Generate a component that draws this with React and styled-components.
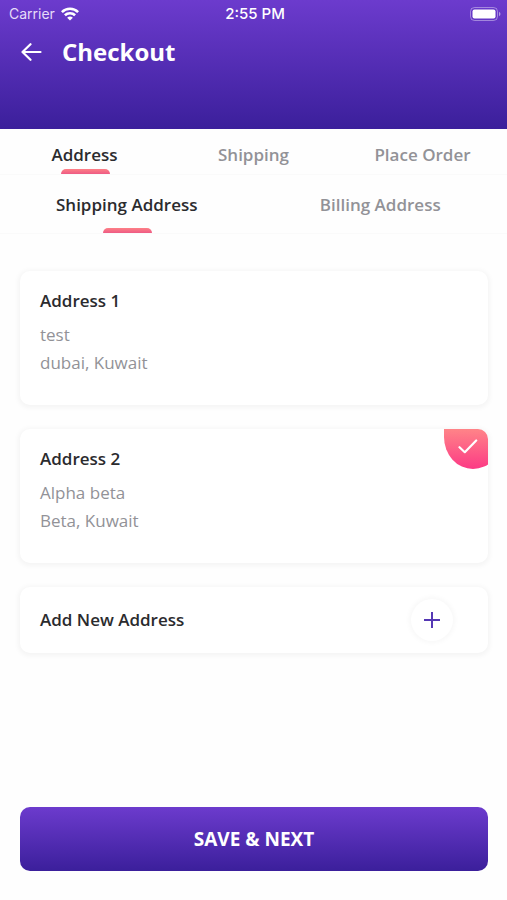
import React, { useState } from 'react'
import styled, { createGlobalStyle } from 'styled-components'

const addresses = [
    { id: 1, title: 'Address 1', name: 'test', place: 'dubai, Kuwait' },
    { id: 2, title: 'Address 2', name: 'Alpha beta', place: 'Beta, Kuwait' },
]

const steps = ['Address', 'Shipping', 'Place Order']
const kinds = ['Shipping Address', 'Billing Address']

function App() {
    const [step, setStep] = useState('Address')
    const [kind, setKind] = useState('Shipping Address')
    const [selected, setSelected] = useState(2)

    return (
        <Page>
            <GlobalStyle />
            <Header>
                <StatusBar>
                    <Carrier>
                        Carrier
                        <svg width="18" height="14" viewBox="0 0 18 14" fill="none" stroke="#fff" strokeWidth="2.6">
                            <path d="M0.9 5.1a11.6 11.6 0 0 1 16.2 0" />
                            <path d="M3.9 8.3a7.3 7.3 0 0 1 10.2 0" />
                            <path d="M9 13.6 6.1 10.8a4.2 4.2 0 0 1 5.8 0z" fill="#fff" stroke="none" />
                        </svg>
                    </Carrier>
                    <Time>2:55 PM</Time>
                    <Battery>
                        <svg width="31" height="14" viewBox="0 0 31 14">
                            <rect x="0.5" y="0.5" width="27" height="13" rx="4" fill="none" stroke="#fff" strokeOpacity="0.4" />
                            <rect x="2.5" y="2.5" width="23" height="9" rx="2" fill="#fff" />
                            <path d="M29 4.8v4.4c2-.8 2-3.6 0-4.4z" fill="#fff" fillOpacity="0.5" />
                        </svg>
                    </Battery>
                </StatusBar>
                <TitleBar>
                    <BackButton aria-label="Back">
                        <svg width="21" height="18" viewBox="0 0 21 18" fill="none" stroke="#fff" strokeWidth="2.2" strokeLinecap="round" strokeLinejoin="round">
                            <path d="M19.500 9H1.500M9.500 1.200 1.500 9l8 7.800" />
                        </svg>
                    </BackButton>
                    <Title>Checkout</Title>
                </TitleBar>
            </Header>

            <Tabs $height={46} $top={6}>
                {steps.map((item) => (
                    <Tab key={item} $active={item === step} onClick={() => setStep(item)}>
                        {item}
                    </Tab>
                ))}
            </Tabs>
            <Tabs $height={59} $top={2}>
                {kinds.map((item) => (
                    <Tab key={item} $active={item === kind} onClick={() => setKind(item)}>
                        {item}
                    </Tab>
                ))}
            </Tabs>

            <List>
                {addresses.map((item) => (
                    <AddressCard key={item.id}>
                        <Radio
                            name="address"
                            checked={selected === item.id}
                            onChange={() => setSelected(item.id)}
                        />
                        <CardTitle>{item.title}</CardTitle>
                        <CardLine>{item.name}</CardLine>
                        <CardLine>{item.place}</CardLine>
                        {selected === item.id && (
                            <Badge>
                                <svg width="20" height="15" viewBox="0 0 20 15" fill="none" stroke="#fff" strokeWidth="2.2" strokeLinecap="round" strokeLinejoin="round">
                                    <path d="M1.500 8.200 6.800 13.200 18.200 1.500" />
                                </svg>
                            </Badge>
                        )}
                    </AddressCard>
                ))}
                <AddCard>
                    <CardTitle>Add New Address</CardTitle>
                    <AddButton aria-label="Add New Address">
                        <svg width="16" height="16" viewBox="0 0 16 16" stroke="#5538b4" strokeWidth="2">
                            <path d="M8 0v16M0 8h16" />
                        </svg>
                    </AddButton>
                </AddCard>
            </List>

            <Footer>
                <SaveButton>SAVE &amp; NEXT</SaveButton>
            </Footer>
        </Page>
    )
}

export default App

const GlobalStyle = createGlobalStyle`
    * {
        box-sizing: border-box;
    }
    body {
        margin: 0;
        background: #fefefe;
        font-family: "Open Sans", "Noto Sans", sans-serif;
    }
    button {
        font-family: inherit;
        border: none;
        padding: 0;
        cursor: pointer;
    }
    svg {
        display: block;
    }
`

const Page = styled.div`
    min-height: 100vh;
    display: flex;
    flex-direction: column;
`

const Header = styled.header`
    padding-bottom: 52px;
    background: linear-gradient(#6c3bcd, #3b1f9b);
    color: #fff;
`

const StatusBar = styled.div`
    display: grid;
    grid-template-columns: 1fr auto 1fr;
    align-items: center;
    height: 27px;
    padding: 0 6px 0 9px;
    font-family: Inter, sans-serif;
    font-size: 14px;
`

const Carrier = styled.div`
    display: flex;
    align-items: center;
    gap: 6px;
    color: #e6dcf8;
`

const Time = styled.div`
    font-size: 15px;
    font-weight: 500;
`

const Battery = styled.div`
    justify-self: end;
`

const TitleBar = styled.div`
    display: flex;
    align-items: center;
    gap: 20px;
    height: 50px;
    padding: 0 21px;
`

const BackButton = styled.button`
    background: none;
`

const Title = styled.h1`
    margin: 0;
    font-size: 24px;
    line-height: 34px;
    font-weight: 700;
`

const Tabs = styled.nav`
    display: flex;
    height: ${(props) => props.$height}px;
    padding-top: ${(props) => props.$top}px;
    border-bottom: 1px solid #fafafa;
`

const Tab = styled.button`
    position: relative;
    flex: 1;
    background: none;
    font-size: 17px;
    line-height: 24px;
    font-weight: 600;
    color: ${(props) => (props.$active ? '#2b2b2e' : '#929297')};

    &:after {
        display: ${(props) => (props.$active ? 'block' : 'none')};
        content: "";
        position: absolute;
        left: calc(50% - 24px);
        bottom: 0;
        width: 49px;
        height: 5px;
        border-radius: 5px 5px 0 0;
        background: linear-gradient(#fd8086, #ee5a84);
    }
`

const List = styled.main`
    display: flex;
    flex-direction: column;
    gap: 24px;
    padding: 37px 19px 24px 20px;
`

const Card = styled.div`
    border-radius: 10px;
    background: #fff;
    box-shadow: 0 1px 5px 2px rgba(0, 0, 0, 0.04);
`

const AddressCard = styled(Card).attrs({ as: 'label' })`
    position: relative;
    display: block;
    height: 134px;
    padding: 18px 20px;
    overflow: hidden;
    cursor: pointer;
`

const Radio = styled.input.attrs({ type: 'radio' })`
    position: absolute;
    opacity: 0;
    margin: 0;
`

const CardTitle = styled.div`
    margin-bottom: 8px;
    font-size: 17px;
    line-height: 24px;
    font-weight: 600;
    color: #2b2b2e;
`

const CardLine = styled.div`
    font-size: 17px;
    line-height: 28px;
    color: #929297;
`

const Badge = styled.div`
    position: absolute;
    top: 0;
    right: -14px;
    width: 58px;
    height: 40px;
    padding: 10px 0 0 14px;
    border-radius: 0 0 29px 29px / 0 0 32px 32px;
    background: linear-gradient(#ff8488, #fc3a85);
`

const AddCard = styled(Card)`
    display: flex;
    align-items: center;
    justify-content: space-between;
    height: 66px;
    padding: 0 35px 0 20px;

    ${CardTitle} {
        margin: 0;
    }
`

const AddButton = styled.button`
    display: flex;
    align-items: center;
    justify-content: center;
    width: 42px;
    height: 42px;
    border-radius: 50%;
    background: #fff;
    box-shadow: 0 0 5px 2px rgba(0, 0, 0, 0.03);
`

const Footer = styled.footer`
    margin-top: auto;
    padding: 0 19px 29px 20px;
`

const SaveButton = styled.button`
    width: 100%;
    height: 64px;
    border-radius: 10px;
    background: linear-gradient(#6c3bcd, #3b1f9b);
    color: #fff;
    font-size: 19px;
    font-weight: 700;
`
